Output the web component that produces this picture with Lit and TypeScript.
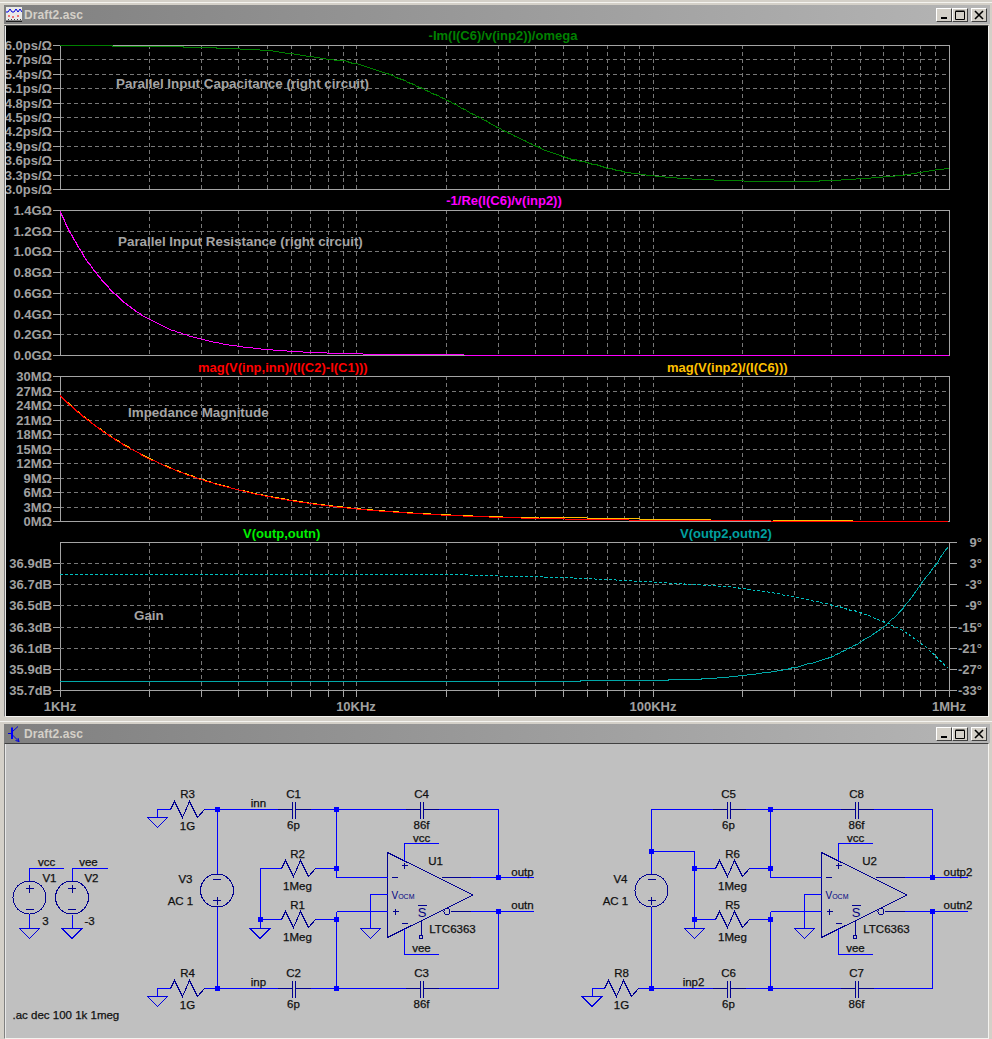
import { LitElement, html, css, svg } from 'lit';
import { customElement, property } from 'lit/decorators.js';

type Pt = [number, number];

const X0 = 60;
const DECADE = 296.33;
const X1 = 949;

// Catmull-Rom through the hand-read points, snapped to the pixel grid like GDI does
const smooth = (pts: Pt[], step = 3): Pt[] => {
    const out: Pt[] = [];
    for (let i = 0; i < pts.length - 1; i++) {
        const p0 = pts[Math.max(i - 1, 0)];
        const p1 = pts[i];
        const p2 = pts[i + 1];
        const p3 = pts[Math.min(i + 2, pts.length - 1)];
        const n = Math.max(1, Math.round((p2[0] - p1[0]) / step));
        for (let k = 0; k < n; k++) {
            const t = k / n;
            const y =
                0.5 *
                (2 * p1[1] +
                    (p2[1] - p0[1]) * t +
                    (2 * p0[1] - 5 * p1[1] + 4 * p2[1] - p3[1]) * t * t +
                    (3 * p1[1] - p0[1] - 3 * p2[1] + p3[1]) * t * t * t);
            out.push([p1[0] + (p2[0] - p1[0]) * t, Math.round(y) + 0.5]);
        }
    }
    const last = pts[pts.length - 1];
    out.push([last[0], Math.round(last[1]) + 0.5]);
    return out;
};

const sample = (from: number, to: number, fn: (x: number) => number): Pt[] => {
    const out: Pt[] = [];
    for (let x = from; x <= to; x += 2) out.push([x, Math.round(fn(x)) + 0.5]);
    return out;
};

const ptsAttr = (pts: Pt[]) => pts.map((p) => p.join(',')).join(' ');

const poly = (pts: Pt[], cls: string) =>
    svg`<polyline class=${cls} points=${ptsAttr(pts)}></polyline>`;

const label = (x: number, y: number, s: string, cls: string) =>
    svg`<text class=${cls} x=${x} y=${y}>${s}</text>`;

// ---- waveform window ----

const gridX: number[] = [];
for (let d = 0; d < 3; d++) {
    for (let m = 1; m < 10; m++) {
        const x = X0 + DECADE * (d + Math.log10(m));
        if (m > 1 || d > 0) gridX.push(Math.round(x) + 0.5);
    }
}

interface Pane {
    top: number;
    bottom: number;
    ticks: { y: number; text: string }[];
}

const evenTicks = (top: number, bottom: number, labels: string[]) =>
    labels.map((text, i) => ({
        y: Math.round(top + ((bottom - top) * i) / (labels.length - 1)),
        text,
    }));

const panes: Pane[] = [
    {
        top: 45,
        bottom: 189,
        ticks: evenTicks(45, 189, [
            '6.0ps/Ω', '5.7ps/Ω', '5.4ps/Ω', '5.1ps/Ω', '4.8ps/Ω', '4.5ps/Ω',
            '4.2ps/Ω', '3.9ps/Ω', '3.6ps/Ω', '3.3ps/Ω', '3.0ps/Ω',
        ]),
    },
    {
        top: 210,
        bottom: 355,
        ticks: evenTicks(210, 355, [
            '1.4GΩ', '1.2GΩ', '1.0GΩ', '0.8GΩ', '0.6GΩ', '0.4GΩ', '0.2GΩ', '0.0GΩ',
        ]),
    },
    {
        top: 376,
        bottom: 521,
        ticks: evenTicks(376, 521, [
            '30MΩ', '27MΩ', '24MΩ', '21MΩ', '18MΩ', '15MΩ', '12MΩ', '9MΩ', '6MΩ', '3MΩ', '0MΩ',
        ]),
    },
    {
        top: 542,
        bottom: 690,
        ticks: evenTicks(563, 690, [
            '36.9dB', '36.7dB', '36.5dB', '36.3dB', '36.1dB', '35.9dB', '35.7dB',
        ]),
    },
];

const phaseTicks = evenTicks(542, 690, ['9°', '3°', '-3°', '-9°', '-15°', '-21°', '-27°', '-33°']);

// the flat start sits on exact pixel rows, the rest is smoothed
const capStart: Pt[] = [
    [60, 45.5], [112, 45.5], [112, 46.5], [183, 46.5], [183, 47.5], [216, 47.5], [216, 48.5], [240, 48.5],
];

const capCurve: Pt[] = [
    [240, 48.5], [268, 50], [290, 53], [310, 56], [330, 59],
    [350, 62], [390, 74], [420, 87], [447, 100], [480, 117], [503, 130], [537, 146], [563, 156],
    [590, 163], [623, 171], [660, 176], [700, 179], [770, 181], [830, 180], [900, 175], [949, 168],
];

const phaseCurve: Pt[] = [
    [60, 574], [450, 574], [500, 575.5], [560, 577], [627, 580], [677, 583], [710, 585], [743, 588],
    [793, 596], [830, 604], [860, 612], [883, 621], [903, 630], [920, 642], [933, 653], [948, 667],
];

const gainStart: Pt[] = [[60, 681.5], [580, 681.5], [580, 680.5], [640, 680.5]];

const gainCurve: Pt[] = [
    [640, 680], [700, 678.5], [743, 675], [790, 668], [830, 657], [860, 642],
    [883, 627], [903, 608], [920, 585], [937, 563], [948, 547],
];

const resCurve: Pt[] = [];
for (let x = X0; x <= 465; x += 2) {
    const y = 355 - 144 * Math.pow(10, (-2 * (x - X0)) / DECADE);
    resCurve.push([x, Math.min(Math.floor(y + 0.28), 354) + 0.5]);
}
const resTail: Pt[] = [[465, 355.5], [X1, 355.5]];

const magFn = (x: number) => 521 - 125.7 * Math.pow(10, (-(x - X0)) / DECADE);
const magRed = sample(X0, X1, magFn);
const magYellow = sample(X0, 560, (x) => magFn(x) - 0.45);

const yellowTail: [number, number, number][] = [
    [540, 587, 517],
    [587, 640, 518],
    [640, 711, 519],
    [773, 853, 520],
];

const paneFrame = (p: Pane, i: number) => {
    const last = i === 3;
    return svg`
        ${p.ticks
            .filter((t) => t.y !== p.top && t.y !== p.bottom)
            .map((t) => poly([[X0, t.y + 0.5], [X1, t.y + 0.5]], 'grid'))}
        ${gridX.map((x) => poly([[x, p.top], [x, p.bottom]], 'grid'))}
        ${p.ticks.map((t) => poly([[53, t.y + 0.5], [X0, t.y + 0.5]], 'axis'))}
        <rect class="axis" x=${X0 + 0.5} y=${p.top + 0.5} width=${X1 - X0} height=${p.bottom - p.top}></rect>
        ${p.ticks.map((t) => label(52, t.y, t.text, 'tick end'))}
        ${last
            ? svg`
                ${phaseTicks.map((t) => poly([[X1, t.y + 0.5], [957, t.y + 0.5]], 'axis'))}
                ${phaseTicks
                    .filter((t) => t.y !== 542 && t.y !== 690)
                    .map((t) => poly([[X0, t.y + 0.5], [X1, t.y + 0.5]], 'grid'))}
                ${phaseTicks.map((t) => label(982, t.y, t.text, 'tick end'))}
                ${[X0 + 0.5, ...gridX, X1 + 0.5].map((x) => poly([[x, 690], [x, 697]], 'axis'))}
            `
            : ''}
    `;
};

const waveform = () => svg`
    <svg class="plot" width="982" height="690" viewBox="6 26 982 690">
        ${panes.map(paneFrame)}

        ${poly(capStart, 'trace green')}
        ${poly(smooth(capCurve), 'trace green')}
        ${poly(resCurve, 'trace magenta')}
        ${poly(resTail, 'trace magenta')}
        ${poly(magYellow, 'trace yellow')}
        ${poly(magRed, 'trace red')}
        ${yellowTail.map(([a, b, y]) => poly([[a, y + 0.5], [b, y + 0.5]], 'trace yellow'))}
        ${poly(smooth(phaseCurve), 'trace cyan dotted')}
        ${poly(gainStart, 'trace teal')}
        ${poly(smooth(gainCurve), 'trace teal')}

        <text class="title mid" x="503" y="35" fill="#008000">-Im(I(C6)/v(inp2))/omega</text>
        <text class="title mid" x="504" y="200" fill="#ff00ff">-1/Re(I(C6)/v(inp2))</text>
        <text class="title" x="198" y="367" fill="#ff0000">mag(V(inp,inn)/(I(C2)-I(C1)))</text>
        <text class="title" x="667" y="367" fill="#ffc000">mag(V(inp2)/(I(C6)))</text>
        <text class="title" x="243" y="533" fill="#00f000">V(outp,outn)</text>
        <text class="title" x="680" y="533" fill="#00a0a0">V(outp2,outn2)</text>

        ${label(116, 83, 'Parallel Input Capacitance (right circuit)', 'note')}
        ${label(118, 241, 'Parallel Input Resistance (right circuit)', 'note')}
        ${label(128, 412, 'Impedance Magnitude', 'note')}
        ${label(134, 615, 'Gain', 'note')}

        ${label(60, 706, '1KHz', 'tick mid')}
        ${label(356, 706, '10KHz', 'tick mid')}
        ${label(653, 706, '100KHz', 'tick mid')}
        ${label(949, 706, '1MHz', 'tick mid')}
    </svg>
`;

// ---- schematic window ----

const wire = (...pts: Pt[]) => poly(pts, 'wire');
const sym = (...pts: Pt[]) => poly(pts, 'sym');

const node = (x: number, y: number) => svg`<rect class="node" x=${x - 2.5} y=${y - 2.5} width="5" height="5"></rect>`;

const ground = (x: number, y: number) =>
    svg`<polygon class="gnd" points="${x - 10},${y} ${x + 10},${y} ${x},${y + 10}"></polygon>`;

const resistor = (x: number, y: number) =>
    sym([x, y], [x + 4, y - 8], [x + 12, y + 8], [x + 19, y - 8], [x + 27, y + 8], [x + 34, y]);

const cap = (cx: number, y: number) => svg`
    ${sym([cx - 16, y], [cx - 1, y])}
    ${sym([cx + 2, y], [cx + 17, y])}
    ${sym([cx - 1, y - 8], [cx - 1, y + 9])}
    ${sym([cx + 2, y - 8], [cx + 2, y + 9])}
`;

const plus = (x: number, y: number, r = 4) => svg`${sym([x - r, y], [x + r, y])}${sym([x, y - r], [x, y + r])}`;
const minus = (x: number, y: number, r = 4) => sym([x - r, y], [x + r, y]);

const source = (x: number, cy: number, flipped: boolean) => svg`
    <circle class="sym" cx=${x} cy=${cy} r="16.5"></circle>
    ${flipped
        ? svg`${minus(x, cy - 11)}${plus(x, cy + 10)}`
        : svg`${plus(x, cy - 9)}${minus(x, cy + 12)}`}
`;

const t = (x: number, y: number, s: string) => label(x, y, s, 'sch');

const rValue = (x: number, y: number, name: string, value: string) => svg`
    ${t(x, y - 16, name)}${t(x, y + 16, value)}
`;

const capLabel = (x: number, y: number, name: string, value: string) => svg`
    ${t(x, y - 16, name)}${t(x, y + 15, value)}
`;

// LTC6363 with its feedback network, drawn at the left circuit's place and shifted by dx
const amp = (dx: number, name: string, outP: string, outN: string) => svg`
    <g transform="translate(${dx} 0)">
        <polygon class="sym" points="387,853 472.5,895.5 387,938"></polygon>
        ${wire([404, 861], [404, 844], [438.5, 844])}
        ${wire([404, 929], [404, 955], [438.5, 955])}
        ${plus(404, 866, 3)}
        ${minus(404, 924, 3)}
        ${minus(394, 878, 3)}
        ${plus(395, 912, 3)}
        ${wire([336, 878], [387, 878])}
        ${wire([336, 912], [387, 912])}
        ${wire([387, 895], [370, 895], [370, 929])}
        ${ground(370, 929)}
        ${sym([441, 878], [470, 878])}
        ${wire([470, 878], [533, 878])}
        <circle class="sym" cx="446.5" cy="912" r="3"></circle>
        ${sym([450, 912], [470, 912])}
        ${wire([470, 912], [533, 912])}
        ${sym([421, 921], [421, 936])}
        <rect class="sym" x="419" y="936" width="3" height="3"></rect>
        ${sym([417, 906], [426, 906])}
        <text class="sym-text mid" x="421.5" y="913">S</text>
        <text class="vocm" x="391" y="896">V<tspan font-size="7">OCM</tspan></text>
        ${t(421, 838, 'vcc')}
        ${t(421, 948, 'vee')}
        ${t(435, 861, name)}
        ${t(452, 929, 'LTC6363')}
        ${t(outP.length > 4 ? 523.5 : 522, 872, outP)}
        ${t(outN.length > 4 ? 523.5 : 522, 905, outN)}
    </g>
`;

const schematic = () => svg`
    <svg class="sheet" width="982" height="294" viewBox="6 745 982 294">
        <g transform="translate(0.5 0.5)">
            <!-- supplies -->
            ${wire([29, 882], [29, 869], [63, 869])}
            ${wire([29, 915], [29, 929])}
            ${source(29, 898, false)}
            ${ground(29, 929)}
            ${wire([71.5, 882], [71.5, 869], [107, 869])}
            ${wire([71.5, 915], [71.5, 929])}
            ${source(71.5, 898, false)}
            ${ground(71.5, 929)}
            ${t(46, 862, 'vcc')}${t(49, 878, 'V1')}${t(45, 921, '3')}
            ${t(88, 862, 'vee')}${t(91, 878, 'V2')}${t(89, 921, '-3')}
            ${label(12, 1015, '.ac dec 100 1k 1meg', 'sch start')}

            <!-- left circuit -->
            ${wire([157, 818], [157, 810], [170, 810])}
            ${ground(157, 818)}
            ${resistor(170, 810)}
            ${wire([204, 810], [277, 810])}
            ${cap(293, 810)}
            ${wire([310, 810], [405, 810])}
            ${cap(421, 810)}
            ${wire([438, 810], [498, 810], [498, 878])}
            ${wire([336, 810], [336, 878])}
            ${wire([157, 997], [157, 989], [170, 989])}
            ${ground(157, 997)}
            ${resistor(170, 989)}
            ${wire([204, 989], [277, 989])}
            ${cap(293, 989)}
            ${wire([310, 989], [405, 989])}
            ${cap(421, 989)}
            ${wire([438, 989], [498, 989], [498, 912])}
            ${wire([336, 912], [336, 989])}
            ${wire([216.5, 810], [216.5, 874])}
            ${wire([216.5, 907], [216.5, 989])}
            ${source(216.5, 891, true)}
            ${wire([259.5, 929], [259.5, 869], [281, 869])}
            ${resistor(281, 869)}
            ${wire([315, 869], [336, 869])}
            ${wire([259.5, 920], [281, 920])}
            ${resistor(281, 920)}
            ${wire([315, 920], [336, 920])}
            ${ground(259.5, 929)}
            ${[[216.5, 810], [336, 810], [336, 869], [259.5, 920], [336, 920], [216.5, 989], [336, 989], [498, 878], [498, 912]].map(
                ([x, y]) => node(x, y)
            )}
            ${rValue(187, 810, 'R3', '1G')}
            ${rValue(187, 989, 'R4', '1G')}
            ${t(185, 879, 'V3')}${t(180, 901, 'AC 1')}
            ${t(258, 803, 'inn')}${t(258, 982, 'inp')}
            ${capLabel(293, 810, 'C1', '6p')}
            ${capLabel(421, 810, 'C4', '86f')}
            ${capLabel(293, 989, 'C2', '6p')}
            ${capLabel(421, 989, 'C3', '86f')}
            ${rValue(297, 870, 'R2', '1Meg')}
            ${rValue(297, 921, 'R1', '1Meg')}
            ${amp(0, 'U1', 'outp', 'outn')}

            <!-- right circuit -->
            ${wire([651, 874], [651, 810], [712, 810])}
            ${cap(728, 810)}
            ${wire([745, 810], [840, 810])}
            ${cap(856, 810)}
            ${wire([873, 810], [932, 810], [932, 878])}
            ${wire([770, 810], [770, 878])}
            ${wire([591.5, 997], [591.5, 989], [604, 989])}
            ${ground(591.5, 997)}
            ${resistor(604, 989)}
            ${wire([638, 989], [712, 989])}
            ${cap(728, 989)}
            ${wire([745, 989], [840, 989])}
            ${cap(856, 989)}
            ${wire([873, 989], [932, 989], [932, 912])}
            ${wire([770, 912], [770, 989])}
            ${wire([651, 907], [651, 989])}
            ${source(651, 891, true)}
            ${wire([651, 852], [694, 852], [694, 929])}
            ${wire([694, 869], [715, 869])}
            ${resistor(715, 869)}
            ${wire([749, 869], [770, 869])}
            ${wire([694, 920], [715, 920])}
            ${resistor(715, 920)}
            ${wire([749, 920], [770, 920])}
            ${ground(694, 929)}
            ${[[651, 852], [694, 869], [694, 920], [770, 810], [770, 869], [770, 920], [651, 989], [770, 989], [932, 878], [932, 912]].map(
                ([x, y]) => node(x, y)
            )}
            ${rValue(621, 989, 'R8', '1G')}
            ${t(620, 879, 'V4')}${t(615, 901, 'AC 1')}
            ${t(693, 982, 'inp2')}
            ${capLabel(728, 810, 'C5', '6p')}
            ${capLabel(856, 810, 'C8', '86f')}
            ${capLabel(728, 989, 'C6', '6p')}
            ${capLabel(856, 989, 'C7', '86f')}
            ${rValue(732, 870, 'R6', '1Meg')}
            ${rValue(732, 921, 'R5', '1Meg')}
            ${amp(434, 'U2', 'outp2', 'outn2')}
        </g>
    </svg>
`;

// ---- window chrome ----

const waveIcon = html`
    <svg class="ico" width="16" height="16" viewBox="0 0 16 16">
        <rect width="16" height="16" fill="#e8e8e8"></rect>
        <path d="M0 5L2 5L4 2L6 5L8 5L10 2L12 5L14 2L16 5" fill="none" stroke="#0000e0"></path>
        <path d="M2 9h2M6 10h2M11 9h2" stroke="#f00000" fill="none"></path>
        <path d="M0 14.5h16" stroke="#202020" stroke-width="2"></path>
        <path d="M2 12.5h1M5 12.5h1M8 12.5h1M11 12.5h1M14 12.5h1" stroke="#404040"></path>
    </svg>
`;

const schIcon = html`
    <svg class="ico" width="16" height="16" viewBox="0 0 16 16">
        <path d="M6 1.5V13" stroke="#0000ff" stroke-width="2"></path>
        <path d="M2 7.5H5M12 0.5L6.5 5.5M6.5 9L13 15.5M13 15.5L9.5 14.5M13 15.5L12 12" fill="none" stroke="#0000e0"></path>
    </svg>
`;

@customElement('lt-window')
export class LtWindow extends LitElement {
    @property()
    caption = '';

    static styles = css`
        :host {
            display: block;
            box-sizing: border-box;
            padding: 2px 2px 2px 4px;
            border-top: 1px solid #f4f3ef;
        }
        :host([flush]) .body {
            margin-top: 0;
        }
        .bar {
            display: flex;
            align-items: center;
            gap: 2px;
            height: 19px;
            padding: 0 3px 0 2px;
            background: linear-gradient(to right, #808080, #b5b5b5);
        }
        .name {
            flex: 1;
            font: bold 12px 'Liberation Sans', Arial, sans-serif;
            color: #d4d0c8;
            letter-spacing: 0.1px;
        }
        .btn {
            width: 16px;
            height: 14px;
            box-sizing: border-box;
            display: flex;
            align-items: center;
            justify-content: center;
            background: #d4d0c8;
            border: 1px solid;
            border-color: #fff #404040 #404040 #fff;
        }
        .btn + .btn {
            margin-left: -2px;
        }
        .btn.close {
            margin-left: 1px;
        }
        .body {
            margin-top: 1px;
            border: 1px solid;
            border-color: #404040 #f4f3ef #f4f3ef #808080;
            padding-left: 1px;
            background: #e8e8e8;
            width: 982px;
            box-sizing: content-box;
            line-height: 0;
        }
    `;

    render() {
        return html`
            <div class="bar">
                <slot name="icon"></slot>
                <span class="name">${this.caption}</span>
                <div class="btn">
                    <svg width="10" height="10" viewBox="0 0 10 10"><path d="M2 8H8" stroke="#000" stroke-width="2"></path></svg>
                </div>
                <div class="btn">
                    <svg width="10" height="10" viewBox="0 0 10 10"><path d="M0.5 1.5H9.5V9.5H0.5ZM0.5 1H9.5" fill="none" stroke="#000"></path></svg>
                </div>
                <div class="btn close">
                    <svg width="10" height="10" viewBox="0 0 10 10"><path d="M1 1L9 9M9 1L1 9" fill="none" stroke="#000" stroke-width="1.6"></path></svg>
                </div>
            </div>
            <div class="body"><slot></slot></div>
        `;
    }
}

@customElement('app-root')
export class AppRoot extends LitElement {
    static styles = css`
        :host {
            display: block;
            width: 992px;
            height: 1039px;
            overflow: hidden;
            background: #d4d0c8;
        }
        .desk {
            display: flex;
            flex-direction: column;
            gap: 2px;
            padding-top: 2px;
        }
        .ico {
            display: block;
        }
        .plot {
            display: block;
            background: #000;
        }
        .sheet {
            display: block;
            background: #c0c0c0;
        }
        .grid {
            fill: none;
            stroke: #787878;
            stroke-dasharray: 4 3;
            shape-rendering: crispEdges;
        }
        .axis {
            fill: none;
            stroke: #a4a4a4;
            shape-rendering: crispEdges;
        }
        .trace {
            fill: none;
            stroke-width: 1;
            shape-rendering: crispEdges;
        }
        .green {
            stroke: #008000;
        }
        .magenta {
            stroke: #ff00ff;
        }
        .red {
            stroke: #ff0000;
        }
        .yellow {
            stroke: #ffc000;
        }
        .teal {
            stroke: #00a8a8;
        }
        .cyan {
            stroke: #00c0c0;
        }
        .dotted {
            stroke-dasharray: 3 2;
        }
        text {
            font-family: 'Liberation Sans', Arial, sans-serif;
            dominant-baseline: central;
        }
        .tick {
            font-size: 13px;
            font-weight: bold;
            fill: #a0a0a0;
        }
        .title {
            font-size: 13px;
            font-weight: bold;
        }
        .note {
            font-size: 13.4px;
            font-weight: bold;
            fill: #a4a4a4;
        }
        .end {
            text-anchor: end;
        }
        .mid {
            text-anchor: middle;
        }
        .sch {
            font-size: 11.5px;
            fill: #101010;
            stroke: #101010;
            stroke-width: 0.25;
            text-anchor: middle;
        }
        .sch.start {
            text-anchor: start;
        }
        .sym-text {
            font-size: 13px;
            fill: #000080;
        }
        .vocm {
            font-size: 10px;
            fill: #000080;
        }
        .wire {
            fill: none;
            stroke: #0000ff;
            shape-rendering: crispEdges;
        }
        .sym {
            fill: none;
            stroke: #000090;
            shape-rendering: crispEdges;
        }
        .gnd {
            fill: none;
            stroke: #0000e0;
            shape-rendering: crispEdges;
        }
        .node {
            fill: #0000ff;
            shape-rendering: crispEdges;
        }
    `;

    render() {
        return html`
            <div class="desk">
                <lt-window caption="Draft2.asc">
                    <span slot="icon">${waveIcon}</span>
                    ${waveform()}
                </lt-window>
                <lt-window caption="Draft2.asc" flush>
                    <span slot="icon">${schIcon}</span>
                    ${schematic()}
                </lt-window>
            </div>
        `;
    }
}
